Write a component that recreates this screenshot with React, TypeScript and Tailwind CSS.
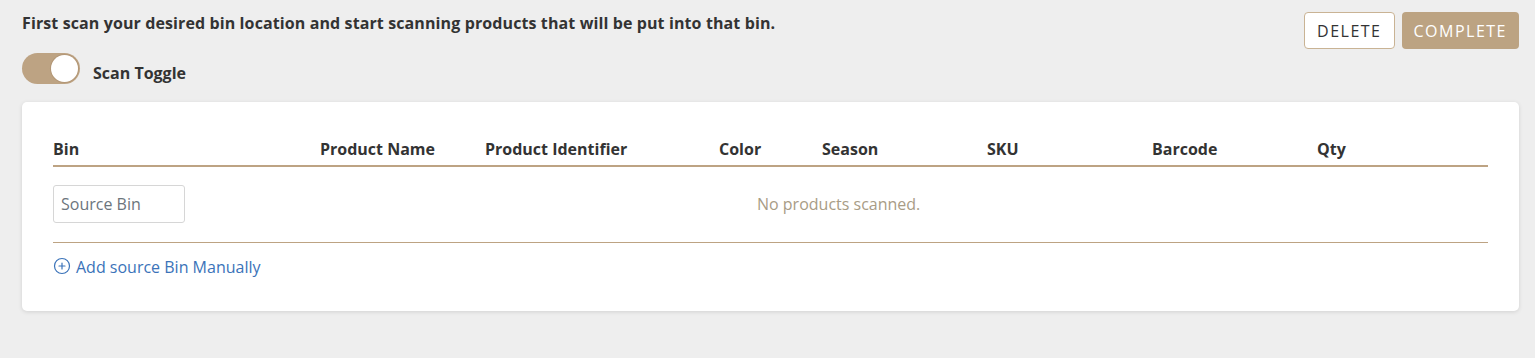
import { CirclePlus } from 'lucide-react';

const columns = [
  { label: 'Bin', width: 'w-[267px]' },
  { label: 'Product Name', width: 'w-[165px]' },
  { label: 'Product Identifier', width: 'w-[234px]' },
  { label: 'Color', width: 'w-[103px]' },
  { label: 'Season', width: 'w-[165px]' },
  { label: 'SKU', width: 'w-[165px]' },
  { label: 'Barcode', width: 'w-[165px]' },
  { label: 'Qty', width: '' },
];

function Toggle({ label }: { label: string }) {
  return (
    <div className="flex items-center gap-[13px]">
      <div className="flex h-[31px] w-[58px] items-center justify-end rounded-full bg-[#bda383] px-[2px]">
        <div className="h-[27px] w-[27px] rounded-full bg-white shadow-[0_0_0_1px_rgba(160,130,95,0.35)]" />
      </div>
      <span className="mt-[10px] text-[16px] font-bold text-[#333]">{label}</span>
    </div>
  );
}

export default function App() {
  return (
    <div className="min-h-[358px] bg-[#eeeeee] pl-[22px] pr-[16px] pt-[12px] pb-[47px] font-['Open_Sans',sans-serif] text-[#333]">
      <div className="flex items-start justify-between">
        <div>
          <p className="text-[16px] font-bold leading-[22px] tracking-[0.11px]">
            First scan your desired bin location and start scanning products that will be put into that bin.
          </p>
          <div className="mt-[17px]">
            <Toggle label="Scan Toggle" />
          </div>
        </div>
        <div className="flex gap-[7px]">
          <button className="h-[37px] rounded-[4px] border border-[#c9b394] bg-white px-[12px] text-[16px] tracking-[1.5px] text-[#333]">
            DELETE
          </button>
          <button className="h-[37px] rounded-[4px] bg-[#bca382] px-[12px] text-[16px] font-medium tracking-[1.5px] text-white">
            COMPLETE
          </button>
        </div>
      </div>

      <div className="mt-[17px] rounded-[5px] bg-white px-[31px] pt-[36px] pb-[32px] shadow-[0_1px_4px_rgba(0,0,0,0.12)]">
        <table className="w-full table-fixed border-collapse text-left">
          <thead>
            <tr className="border-b-2 border-[#bda383]">
              {columns.map((c) => (
                <th key={c.label} className={`${c.width} pb-[5px] text-[16px] font-bold leading-[22px]`}>
                  {c.label}
                </th>
              ))}
            </tr>
          </thead>
          <tbody>
            <tr className="border-b border-[#bda383]">
              <td className="pt-[18px] pb-[19px] align-middle">
                <input
                  placeholder="Source Bin"
                  className="h-[38px] w-[132px] rounded-[3px] border border-[#d6d6d6] px-[7px] text-[16px] text-[#333] placeholder:text-[#6c757d] outline-none"
                />
              </td>
              <td colSpan={7} className="pt-[18px] pb-[19px] pl-[437px] align-middle text-[16px] text-[#a89c86]">
                No products scanned.
              </td>
            </tr>
          </tbody>
        </table>
        <a className="mt-[12px] flex items-center gap-[5px] text-[16px] text-[#3b73b9]">
          <CirclePlus size={18} strokeWidth={1.6} className="-mt-[3px]" />
          <span>Add source Bin Manually</span>
        </a>
      </div>
    </div>
  );
}
